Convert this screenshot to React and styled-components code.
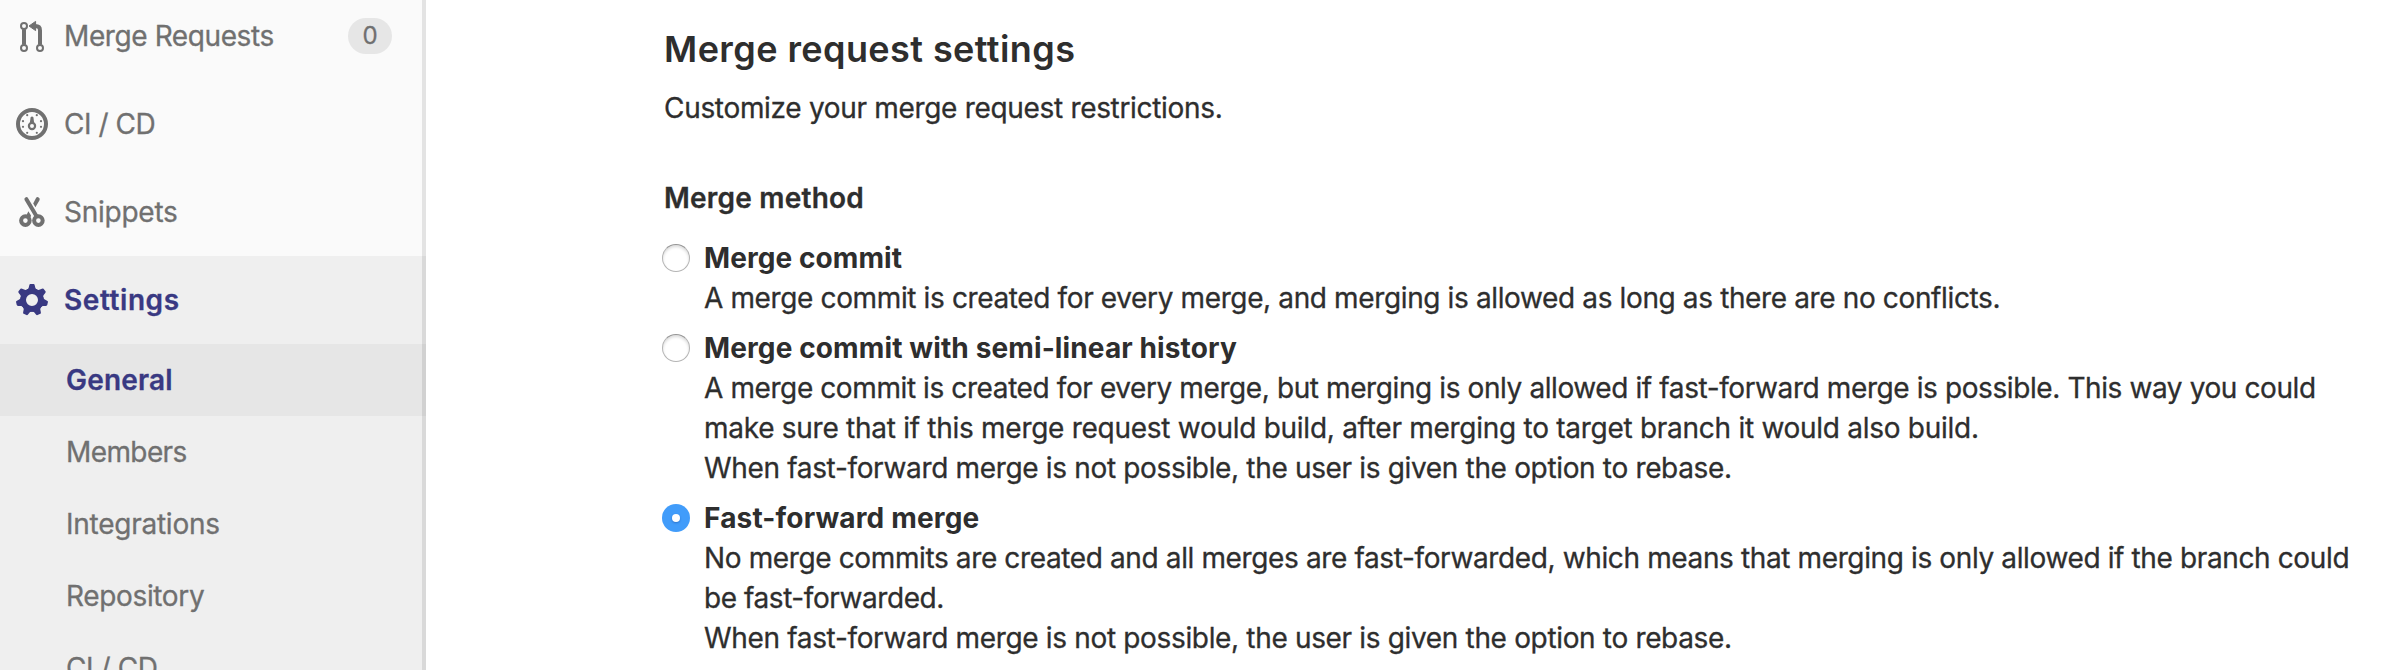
import React from "react";
import styled, { createGlobalStyle } from "styled-components";

const GlobalStyle = createGlobalStyle`
  *, *::before, *::after { box-sizing: border-box; }
  body {
    margin: 0;
    background: #fff;
    color: #2e2e2e;
    font: 400 28px/40px Inter, "Liberation Sans", sans-serif;
    -webkit-text-stroke: 0.3px currentColor;
  }
`;

const Page = styled.div`
  display: flex;
  height: 670px;
  overflow: hidden;
`;

const Sidebar = styled.nav`
  flex: none;
  width: 426px;
  height: 670px;
  overflow: hidden;
  position: relative;
  background: #fafafa;
  color: #707070;

  &::after {
    content: "";
    position: absolute;
    inset: 0 0 0 auto;
    width: 4px;
    background: rgba(0, 0, 0, 0.09);
  }
`;

const NavList = styled.ul`
  list-style: none;
  margin: -8px 0 0;
  padding: 0;
`;

const NavGroup = styled.li`
  background: ${(p) => (p.$active ? "#efefef" : "transparent")};
`;

const NavLink = styled.a`
  display: flex;
  align-items: center;
  height: 88px;
  padding: 0 34px 0 16px;
  color: ${(p) => (p.$active ? "#393982" : "inherit")};
  font-weight: ${(p) => (p.$active ? 600 : 400)};
`;

const NavIcon = styled.svg`
  flex: none;
  width: 32px;
  height: 32px;
  margin-right: 16px;
`;

const NavLabel = styled.span`
  flex: 1;
  white-space: nowrap;
  letter-spacing: ${(p) => p.$tracking}px;
`;

const Badge = styled.span`
  display: flex;
  align-items: center;
  justify-content: center;
  width: 44px;
  height: 36px;
  border-radius: 18px;
  background: #e6e6e6;
  font-size: 24px;
  line-height: 36px;
`;

const SubList = styled.ul`
  list-style: none;
  margin: 0;
  padding: 0;
`;

const SubLink = styled.a`
  display: flex;
  align-items: center;
  height: 72px;
  padding-left: 66px;
  background: ${(p) => (p.$active ? "#e6e6e6" : "transparent")};
  color: ${(p) => (p.$active ? "#393982" : "inherit")};
  font-weight: ${(p) => (p.$active ? 600 : 400)};
`;

const Content = styled.main`
  flex: 1;
  min-width: 0;
  padding: 29px 0 0 238px;
`;

const Title = styled.h4`
  margin: 0 0 19px;
  font-size: 36px;
  font-weight: 600;
  line-height: 40px;
  letter-spacing: 0.42px;
  -webkit-text-stroke: 0;
`;

const Intro = styled.p`
  margin: 0 0 50px;
  letter-spacing: -0.315px;
`;

const FieldLabel = styled.div`
  margin-bottom: 20px;
  font-weight: 600;
  letter-spacing: 0.22px;
`;

const Options = styled.div`
  display: flex;
  flex-direction: column;
  gap: 10px;
`;

const Option = styled.label`
  display: flex;
  align-items: flex-start;
  gap: 14px;
  margin-left: -2px;
`;

const Radio = styled.span`
  flex: none;
  display: grid;
  place-items: center;
  width: 28px;
  height: 28px;
  margin-top: 6px;
  border-radius: 50%;
  background: ${(p) => (p.$checked ? "#419cfa" : "#fff")};
  border: ${(p) => (p.$checked ? "0" : "1px solid #b4b4b4")};
  border-top-color: #959595;
  box-shadow: ${(p) => (p.$checked ? "none" : "inset 0 2px 3px rgba(0, 0, 0, 0.14)")};

  &::after {
    content: "";
    width: 8px;
    height: 8px;
    border-radius: 50%;
    background: #fff;
    box-shadow: ${(p) => (p.$checked ? "0 1px 2px rgba(0, 40, 120, 0.35)" : "none")};
  }
`;

const OptionTitle = styled.div`
  font-weight: 700;
  letter-spacing: ${(p) => p.$tracking}px;
  -webkit-text-stroke: 0;
`;

const Line = styled.div`
  white-space: nowrap;
  letter-spacing: ${(p) => p.$tracking}px;
`;

const MergeIcon = () => (
  <NavIcon viewBox="0 0 16 16" fill="none" stroke="currentColor">
    <circle cx="4" cy="3" r="1.5" strokeWidth="1" />
    <circle cx="4" cy="14" r="1.5" strokeWidth="1" />
    <circle cx="12" cy="14" r="1.5" strokeWidth="1" />
    <path d="M4 4.6v7.8M12 12.4V5.2Q12 3 9.6 3" strokeWidth="2" />
    <path d="M6.5 3 9.8.7v4.6z" fill="currentColor" strokeWidth=".5" strokeLinejoin="round" />
  </NavIcon>
);

const TICKS = [
  [-4.5, -1.4], [-4.5, 1.4], [4.5, -1.4], [4.5, 1.4],
  [-2.4, -4.4], [2.4, -4.4], [-2.4, 4.4], [2.4, 4.4],
];

const GaugeIcon = () => (
  <NavIcon viewBox="-8 -8 16 16" fill="currentColor">
    <circle r="7" fill="none" stroke="currentColor" strokeWidth="2" />
    {TICKS.map(([x, y]) => (
      <circle key={`${x},${y}`} cx={x} cy={y} r=".55" />
    ))}
    <path d="M-.7-3.4Q0-4.2.7-3.4L1.1-.4h-2.2z" />
    <circle cy="1" r="1.55" fill="none" stroke="currentColor" strokeWidth="1.1" />
  </NavIcon>
);

const ScissorsIcon = () => (
  <NavIcon viewBox="0 0 16 16" fill="none" stroke="currentColor" strokeWidth="2">
    <circle cx="4.7" cy="12.3" r="2.15" />
    <circle cx="11.2" cy="12.3" r="2.15" />
    <path d="M5.2 1.6 10.2 10" strokeLinecap="round" />
    <path
      d="M9.95 1.15a1 1 0 0 1 1.8.95L9.7 5.6 8.6 3.7zM6.2 7.6 7.5 9.7 7.3 10.6 5 10z"
      fill="currentColor"
      stroke="none"
    />
  </NavIcon>
);

const GearIcon = () => (
  <NavIcon viewBox="-8 -8 16 16" fill="currentColor">
    <circle r="4.4" fill="none" stroke="currentColor" strokeWidth="2.8" />
    {[0, 1, 2, 3, 4, 5, 6].map((i) => (
      <path
        key={i}
        transform={`rotate(${(i * 360) / 7})`}
        d="M-.8-8H.8Q1.25-8 1.35-7.4L1.7-6Q2-5.3 2.9-5V-4h-5.8v-1Q-2-5.3-1.7-6L-1.35-7.4Q-1.25-8-.8-8z"
      />
    ))}
  </NavIcon>
);

const NAV = [
  { label: "Merge Requests", tracking: -0.4, Icon: MergeIcon, count: 0 },
  { label: "CI / CD", tracking: -0.45, Icon: GaugeIcon },
  { label: "Snippets", tracking: -0.25, Icon: ScissorsIcon },
  {
    label: "Settings",
    tracking: 0.58,
    Icon: GearIcon,
    active: true,
    children: [
      { label: "General", tracking: 0.2, active: true },
      { label: "Members", tracking: -0.6 },
      { label: "Integrations", tracking: -0.25 },
      { label: "Repository", tracking: -0.35 },
      { label: "CI / CD", tracking: -0.42 },
    ],
  },
];

const METHODS = [
  {
    title: "Merge commit",
    tracking: 0.08,
    lines: [
      ["A merge commit is created for every merge, and merging is allowed as long as there are no conflicts.", -0.37],
    ],
  },
  {
    title: "Merge commit with semi-linear history",
    tracking: 0.12,
    lines: [
      ["A merge commit is created for every merge, but merging is only allowed if fast-forward merge is possible. This way you could", -0.402],
      ["make sure that if this merge request would build, after merging to target branch it would also build.", -0.275],
      ["When fast-forward merge is not possible, the user is given the option to rebase.", -0.338],
    ],
  },
  {
    title: "Fast-forward merge",
    tracking: 0.16,
    checked: true,
    lines: [
      ["No merge commits are created and all merges are fast-forwarded, which means that merging is only allowed if the branch could", -0.374],
      ["be fast-forwarded.", -0.435],
      ["When fast-forward merge is not possible, the user is given the option to rebase.", -0.338],
    ],
  },
];

export default function App() {
  return (
    <Page>
      <GlobalStyle />
      <Sidebar>
        <NavList>
          {NAV.map(({ label, tracking, Icon, count, active, children }) => (
            <NavGroup key={label} $active={active}>
              <NavLink $active={active}>
                <Icon />
                <NavLabel $tracking={tracking}>{label}</NavLabel>
                {count !== undefined && <Badge>{count}</Badge>}
              </NavLink>
              {children && (
                <SubList>
                  {children.map((item) => (
                    <li key={item.label}>
                      <SubLink $active={item.active}>
                        <NavLabel $tracking={item.tracking}>{item.label}</NavLabel>
                      </SubLink>
                    </li>
                  ))}
                </SubList>
              )}
            </NavGroup>
          ))}
        </NavList>
      </Sidebar>
      <Content>
        <Title>Merge request settings</Title>
        <Intro>Customize your merge request restrictions.</Intro>
        <FieldLabel>Merge method</FieldLabel>
        <Options>
          {METHODS.map((method) => (
            <Option key={method.title}>
              <Radio $checked={method.checked} />
              <div>
                <OptionTitle $tracking={method.tracking}>{method.title}</OptionTitle>
                {method.lines.map(([text, tracking]) => (
                  <Line key={text} $tracking={tracking}>{text}</Line>
                ))}
              </div>
            </Option>
          ))}
        </Options>
      </Content>
    </Page>
  );
}
